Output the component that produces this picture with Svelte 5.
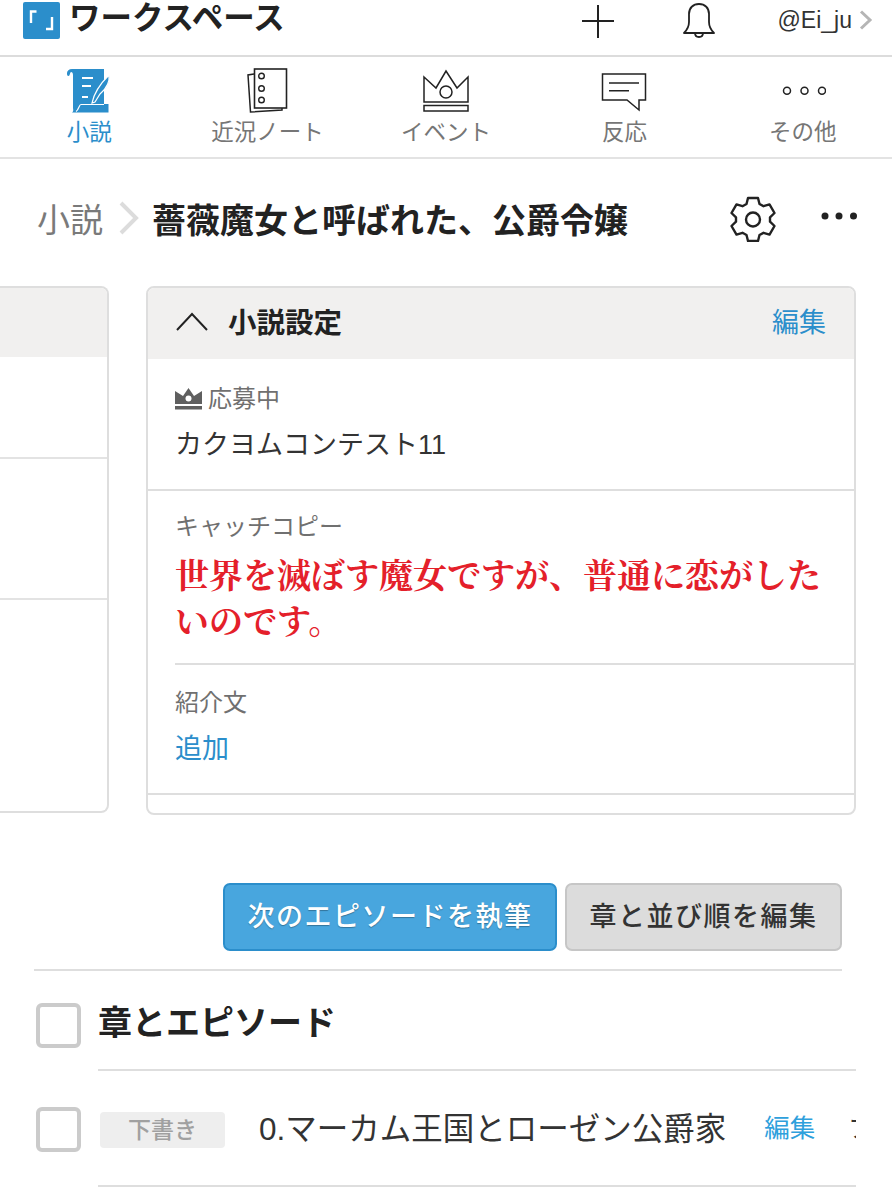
<script>
  const navItems = [
    { label: "小説", icon: "scroll", active: true },
    { label: "近況ノート", icon: "note" },
    { label: "イベント", icon: "crown" },
    { label: "反応", icon: "speech" },
    { label: "その他", icon: "more" },
  ];
</script>

<div class="page">
  <header class="topbar">
    <div class="brand">
      <svg class="logo" width="37" height="37" viewBox="0 0 37 37">
        <rect width="37" height="37" rx="2" fill="#2b8ecb" />
        <path d="M8 21V9.500h5.500M29 15v12h-6" fill="none" stroke="#fff" stroke-width="2.400" />
      </svg>
      <span class="brand-name">ワークスペース</span>
    </div>
    <div class="top-actions">
      <svg width="34" height="34" viewBox="0 0 34 34">
        <path d="M17 1v33M1 17h32" stroke="#222" stroke-width="2" fill="none" />
      </svg>
      <svg class="bell" width="34" height="36" viewBox="0 0 34 36">
        <path d="M2 31c3-3 5-6 5-11v-8C7 6 11 2 17 2s10 4 10 10v8c0 5 2 8 5 11zM13 31c0 3 2 4 4 4s4-1 4-4" fill="none" stroke="#222" stroke-width="1.800" stroke-linejoin="round" />
      </svg>
      <span class="user">@Ei_ju</span>
      <svg class="user-arrow" width="14" height="20" viewBox="0 0 14 20">
        <path d="M2 1.500l9 8.500-9 8.500" fill="none" stroke="#b5b5b5" stroke-width="3" />
      </svg>
    </div>
  </header>

  <nav class="tabs">
    {#each navItems as item}
      <div class="tab" class:active={item.active}>
        <div class="tab-icon">
          {#if item.icon === "scroll"}
            <svg width="46" height="46" viewBox="0 0 46 46">
              <path d="M6 1h32v35h4.500v8.500H6c2-1 1-3 1-5V7c0-2-.8-3-2-3-1 0-1 4-2.500 4S1 6 1 5c0-2 2-4 5-4z" fill="#2b8ecb" />
              <path d="M16 10h11M16 18h9M16 29h6" stroke="#fff" stroke-width="2" fill="none" />
              <path d="M15 36.500h23M15 36.500c-2 0-2 5-5 7" stroke="#fff" stroke-width="1.200" fill="none" />
              <path d="M26 35c2-10 10-21 17-28 1 7-2 13-9 19l-5 8z" fill="#2b8ecb" stroke="#fff" stroke-width="1.200" />
            </svg>
          {:else if item.icon === "note"}
            <svg width="46" height="46" viewBox="0 0 46 46">
              <path d="M9 6L3 7l2.500 37L37 42v-2" fill="none" stroke="#222" stroke-width="1.500" />
              <rect x="9.500" y="1" width="32" height="39" fill="#fff" stroke="#222" stroke-width="1.600" />
              <circle cx="16.500" cy="8" r="2.800" fill="none" stroke="#222" stroke-width="1.400" />
              <circle cx="16.500" cy="20.500" r="2.800" fill="none" stroke="#222" stroke-width="1.400" />
              <circle cx="16.500" cy="32" r="2.800" fill="none" stroke="#222" stroke-width="1.400" />
            </svg>
          {:else if item.icon === "crown"}
            <svg width="46" height="46" viewBox="0 0 46 46">
              <path d="M1 9l12 11L23 3l11 17L45 9v25H1z" fill="none" stroke="#222" stroke-width="1.500" />
              <circle cx="23" cy="24" r="6" fill="none" stroke="#222" stroke-width="1.500" />
              <rect x="1" y="37.500" width="44" height="5.500" fill="none" stroke="#222" stroke-width="1.500" />
            </svg>
          {:else if item.icon === "speech"}
            <svg width="46" height="46" viewBox="0 0 46 46">
              <path d="M1.500 6h43v26H38v10L26 32H1.500z" fill="none" stroke="#222" stroke-width="1.500" />
              <path d="M8 15h30M8 22.700h20" stroke="#222" stroke-width="1.500" fill="none" />
            </svg>
          {:else}
            <svg width="46" height="46" viewBox="0 0 46 46">
              <circle cx="7" cy="22.700" r="3.500" fill="none" stroke="#222" stroke-width="1.500" />
              <circle cx="24.500" cy="22.700" r="3.500" fill="none" stroke="#222" stroke-width="1.500" />
              <circle cx="42" cy="22.700" r="3.500" fill="none" stroke="#222" stroke-width="1.500" />
            </svg>
          {/if}
        </div>
        <span class="tab-label">{item.label}</span>
      </div>
    {/each}
  </nav>

  <div class="crumbs">
    <span class="crumb-root">小説</span>
    <svg class="crumb-arrow" width="22" height="34" viewBox="0 0 22 34">
      <path d="M3 2l15 15L3 32" fill="none" stroke="#dcdcdc" stroke-width="4" />
    </svg>
    <h1 class="crumb-title">薔薇魔女と呼ばれた、公爵令嬢</h1>
    <svg class="gear" width="46" height="46" viewBox="0 0 46 46">
      <path d="M18 2h10l1.500 6 4 2.200 6-1.800 5 8.600-4.500 4.300v4.400l4.500 4.300-5 8.600-6-1.800-4 2.200-1.500 6H18l-1.500-6-4-2.200-6 1.800-5-8.600L6 25.700v-4.400L1.500 17l5-8.600 6 1.800 4-2.200z" fill="none" stroke="#222" stroke-width="2.400" stroke-linejoin="round" />
      <circle cx="23" cy="23.500" r="7" fill="none" stroke="#222" stroke-width="2.400" />
    </svg>
    <svg class="dots" width="36" height="8" viewBox="0 0 36 8">
      <circle cx="4" cy="4" r="3.500" fill="#222" />
      <circle cx="18" cy="4" r="3.500" fill="#222" />
      <circle cx="32.500" cy="4" r="3.500" fill="#222" />
    </svg>
  </div>

  <div class="cards">
    <div class="card side">
      <div class="side-head"></div>
      <div class="side-row"></div>
      <div class="side-row second"></div>
    </div>

    <section class="card main">
      <div class="card-head">
        <svg width="32" height="20" viewBox="0 0 32 20">
          <path d="M1 19L16 3l15 16" fill="none" stroke="#222" stroke-width="2" />
        </svg>
        <h2>小説設定</h2>
        <a class="link edit" href="#edit">編集</a>
      </div>

      <div class="field contest">
        <div class="field-label">
          <svg width="27" height="23" viewBox="0 0 27 23">
            <path d="M0 3l8 5 5.500-8L19 8l8-5v13H0z M0 18h27v3.500H0z" fill="#5f5f5f" />
            <circle cx="13.500" cy="10.500" r="3" fill="#fff" />
          </svg>
          応募中
        </div>
        <p class="value">カクヨムコンテスト11</p>
      </div>

      <div class="field catch">
        <div class="field-label">キャッチコピー</div>
        <p class="catch-copy">世界を滅ぼす魔女ですが、普通に恋がしたいのです。</p>
      </div>

      <div class="field intro">
        <div class="field-label">紹介文</div>
        <a class="link add" href="#add">追加</a>
      </div>
      <div class="card-foot"></div>
    </section>
  </div>

  <div class="buttons">
    <button class="btn primary">次のエピソードを執筆</button>
    <button class="btn">章と並び順を編集</button>
  </div>

  <div class="episodes">
    <div class="ep-head">
      <span class="check"></span>
      <h2>章とエピソード</h2>
    </div>
    <div class="ep-row">
      <span class="check"></span>
      <div class="ep-body">
        <span class="draft">下書き</span>
        <span class="ep-title">0.マーカム王国とローゼン公爵家</span>
        <a class="link ep-edit" href="#edit">編集</a>
        <span class="ep-more">プレビュー</span>
      </div>
    </div>
  </div>
</div>

<style>
  :global(body) {
    margin: 0;
    background: #fff;
  }

  .page {
    width: 892px;
    height: 1200px;
    overflow: hidden;
    color: #222;
    font-family: "Liberation Sans", "Noto Sans CJK JP", sans-serif;
  }

  .topbar {
    height: 53px;
    border-bottom: 2px solid #dcdcdc;
    display: flex;
    justify-content: space-between;
    padding: 2px 19px 0 23px;
  }

  .brand {
    display: flex;
    gap: 9px;
    height: 37px;
  }

  .brand-name {
    font-size: 31.500px;
    font-weight: 700;
    line-height: 32px;
  }

  .top-actions {
    display: flex;
    height: 38px;
    align-items: center;
  }

  .bell {
    margin-left: 67px;
    margin-top: -3px;
  }

  .user {
    margin-left: 62px;
    font-size: 23px;
    margin-top: -2px;
    color: #333;
  }

  .user-arrow {
    margin-left: 7px;
    margin-top: -2px;
  }

  .tabs {
    display: grid;
    grid-template-columns: repeat(5, 1fr);
    height: 100px;
    border-bottom: 2px solid #e3e3e3;
  }

  .tab {
    display: flex;
    flex-direction: column;
    align-items: center;
    padding-top: 11px;
  }

  .tab-icon {
    height: 46px;
  }

  .tab-label {
    font-size: 22.500px;
    line-height: 30px;
    margin-top: 4px;
    color: #767676;
  }

  .tab.active .tab-label {
    color: #2b8ecb;
  }

  .crumbs {
    display: flex;
    align-items: center;
    height: 60px;
    padding: 29px 0 38px 37px;
  }

  .crumb-root {
    font-size: 33px;
    color: #7a7a7a;
  }

  .crumb-arrow {
    margin-left: 15px;
  }

  .crumb-title {
    margin: 0 0 0 12px;
    font-size: 34px;
    font-weight: 700;
    width: 578px;
    white-space: nowrap;
  }

  .gear {
    margin-top: 2px;
  }

  .dots {
    margin-left: 45px;
    margin-top: -5px;
  }

  .cards {
    display: flex;
    align-items: flex-start;
    gap: 37px;
  }

  .card {
    border: 2px solid #dedede;
    border-radius: 8px;
    box-sizing: border-box;
    overflow: hidden;
    background: #fff;
  }

  .side {
    width: 109px;
    height: 527px;
    border-left: none;
    border-radius: 0 8px 8px 0;
  }

  .side-head {
    height: 69px;
    background: #f1f0ef;
  }

  .side-row {
    height: 100px;
    border-bottom: 2px solid #e3e3e3;
  }

  .side-row.second {
    height: 139px;
  }

  .main {
    width: 710px;
    height: 529px;
  }

  .card-head {
    height: 71px;
    box-sizing: border-box;
    background: #f1f0ef;
    display: flex;
    align-items: center;
    padding: 0 28px 6px;
  }

  .card-head h2 {
    margin: 0 0 0 20px;
    font-size: 28.500px;
    font-weight: 700;
  }

  .link {
    color: #2b8ecb;
    text-decoration: none;
  }

  .edit {
    margin-left: auto;
    font-size: 27px;
  }

  .field {
    margin-left: 27px;
  }

  .field-label {
    display: flex;
    align-items: center;
    gap: 6px;
    font-size: 24px;
    line-height: 32px;
    color: #707070;
  }

  .contest {
    margin-left: 0;
    padding: 24px 27px 0;
    height: 106px;
    border-bottom: 2px solid #dedede;
  }

  .value {
    margin: 11px 0 0;
    font-size: 27px;
    line-height: 38px;
    color: #333;
  }

  .catch {
    padding-top: 20px;
    height: 152px;
    border-bottom: 2px solid #dedede;
  }

  .catch-copy {
    margin: 8px 0 0;
    width: 650px;
    font-family: "Noto Serif CJK JP", "Liberation Serif", "Noto Sans CJK JP", serif;
    font-size: 34px;
    line-height: 46px;
    font-weight: 700;
    color: #e4202a;
  }

  .intro {
    padding-top: 22px;
  }

  .add {
    display: block;
    margin-top: 11px;
    font-size: 27px;
    line-height: 38px;
  }

  .card-foot {
    margin-top: 25px;
    border-top: 2px solid #dedede;
  }

  .buttons {
    display: flex;
    justify-content: flex-end;
    gap: 8px;
    padding: 68px 50px 0 0;
  }

  .btn {
    height: 68px;
    border: 2px solid #c6c6c6;
    border-radius: 7px;
    background: #dcdcdc;
    font-family: inherit;
    font-size: 27px;
    font-weight: 500;
    letter-spacing: 1.500px;
    color: #333;
    padding: 0 0 6px;
    width: 277px;
  }

  .btn.primary {
    width: 334px;
    background: #48a6de;
    border-color: #2b8ecb;
    color: #fff;
    text-shadow: 0 1px 1px rgba(0, 0, 0, 0.3);
  }

  .episodes {
    margin: 18px 50px 0 34px;
    border-top: 2px solid #dedede;
  }

  .ep-head {
    display: flex;
    align-items: center;
    height: 98px;
  }

  .ep-head h2 {
    margin: 1px 0 0 17px;
    font-size: 34px;
    font-weight: 700;
  }

  .check {
    flex: none;
    margin-left: 2px;
    width: 45px;
    height: 45px;
    box-sizing: border-box;
    border: 4px solid #cbcbcb;
    border-radius: 6px;
  }

  .ep-head .check {
    margin-top: 11px;
  }

  .ep-row {
    display: flex;
    margin-right: -14px;
    align-items: center;
  }

  .ep-row .check {
    margin-top: 3px;
  }

  .ep-body {
    flex: 1;
    margin-left: 17px;
    display: flex;
    align-items: center;
    height: 114px;
    border-top: 2px solid #dedede;
    border-bottom: 2px solid #dedede;
    overflow: hidden;
    white-space: nowrap;
  }

  .draft {
    flex: none;
    width: 125px;
    height: 36px;
    margin: 3px 0 0 2px;
    background: #eee;
    border-radius: 4px;
    text-align: center;
    line-height: 36px;
    font-size: 23px;
    font-weight: 500;
    color: #a0a0a0;
  }

  .ep-title {
    margin: 0 0 5px 34px;
    font-size: 31.500px;
    color: #333;
  }

  .ep-edit {
    margin: 0 0 5px 38px;
    font-size: 25.500px;
    color: #2ea0dc;
  }

  .ep-more {
    margin: 0 0 5px 33px;
    font-size: 25.500px;
    color: #333;
  }
</style>
